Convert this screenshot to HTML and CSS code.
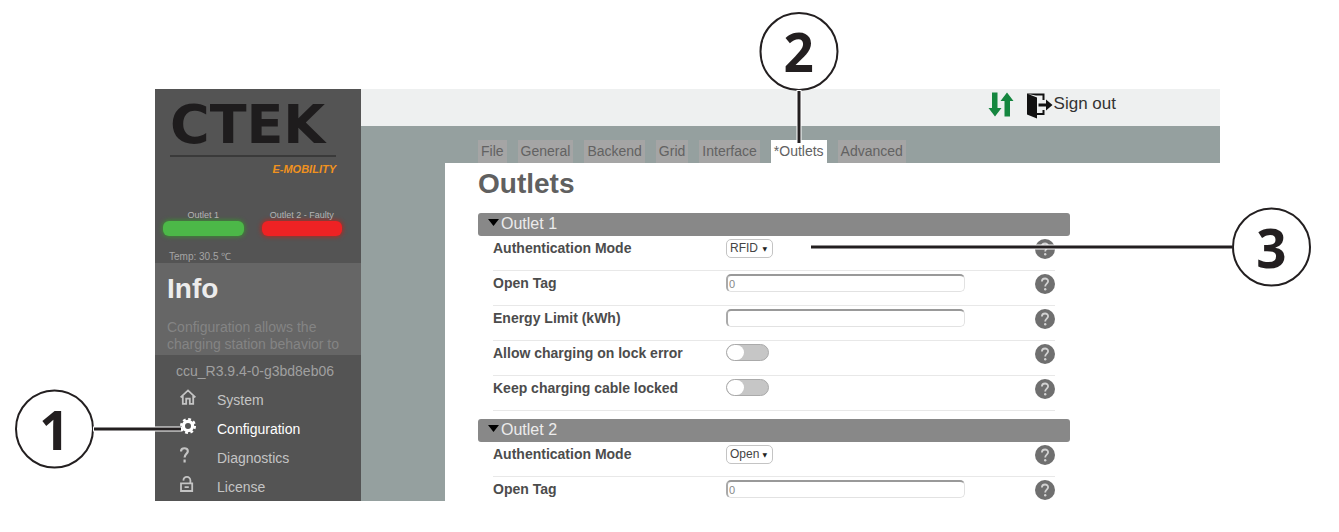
FILE: index.html
```html
<!DOCTYPE html>
<html lang="en">
<head>
    <meta charset="UTF-8">
    <meta name="viewport" content="width=device-width, initial-scale=1.0">
    <title>CTEK E-Mobility - Outlets</title>
    <link rel="stylesheet" href="styles.css">
</head>
<body>
<svg class="defs" width="0" height="0" aria-hidden="true">
    <symbol id="help" viewBox="0 0 20 20">
        <circle cx="10" cy="10" r="10" fill="#6f6f6f"/>
        <path d="M6.9 7.6C6.9 3.4 13.2 3.6 13.1 7.3C13 9.6 10.2 9.7 10.2 12.4" fill="none" stroke="#d2d2d2" stroke-width="1.8"/>
        <circle cx="10.2" cy="15.2" r="1.2" fill="#d2d2d2"/>
    </symbol>
</svg>
<div class="app">
    <aside class="sidebar">
        <div class="logo">
            <div class="logo-name">CTEK</div>
            <div class="logo-sub">E-MOBILITY</div>
        </div>
        <div class="status">
            <div class="outlet">Outlet 1<span class="lamp green"></span></div>
            <div class="outlet">Outlet 2 - Faulty<span class="lamp red"></span></div>
        </div>
        <div class="temp">Temp: 30.5 ℃</div>
        <div class="info">
            <h2>Info</h2>
            <p>Configuration allows the charging station behavior to</p>
        </div>
        <div class="version">ccu_R3.9.4-0-g3bd8eb06</div>
        <ul class="menu">
            <li>
                <a href="#">
                    <svg width="16" height="16" viewBox="0 0 16 16" fill="none" stroke="currentColor" stroke-width="1.8"><path d="M.6 8.4L8 1.4L15.4 8.4M2.8 7V14.8H6.2V9.6H9.8V14.8H13.2V7"/></svg>
                    System
                </a>
            </li>
            <li class="active">
                <a href="#">
                    <svg width="16" height="16" viewBox="0 0 16 16" fill="none" stroke="currentColor"><circle cx="8" cy="8" r="4.6" stroke-width="3.2"/><circle cx="8" cy="8" r="6.8" stroke-width="2.4" stroke-dasharray="2.8 2.54"/></svg>
                    Configuration
                </a>
                <div class="callout callout-left"><span class="circle">1</span><span class="line"></span></div>
            </li>
            <li>
                <a href="#">
                    <svg width="16" height="16" viewBox="0 0 16 16" fill="none" stroke="currentColor" stroke-width="2.2"><path d="M1 4.6C1 .2 7.8 .2 7.8 4.2C7.8 6.8 4.6 6.8 4.6 10.6M4.6 12.4V15.4"/></svg>
                    Diagnostics
                </a>
            </li>
            <li>
                <a href="#">
                    <svg width="16" height="16" viewBox="0 0 16 16" fill="none" stroke="currentColor" stroke-width="1.8"><path d="M1 7.4H12.2V15H1ZM3.4 4.6C3.6 -.2 10.4 -.2 10.4 4.4V7.4M4.6 11.2H8.8"/></svg>
                    License
                </a>
            </li>
        </ul>
    </aside>
    <main class="main">
        <header class="topbar">
            <svg width="26" height="25" viewBox="0 0 26 25" fill="#15863f"><path d="M4 .5H9.5V16H13.5L7 24.5L.5 16H4ZM16.5 24.5V9H12.5L19 .5L25.5 9H22V24.5Z"/></svg>
            <a class="signout" href="#">
                <svg width="27" height="27" viewBox="0 0 27 27"><path d="M2 2L11 5.5V26.5L1 22.5V1.5H18.5V8H16.5V3.5H10" fill="#111"/><path d="M11 22H17.5V18" fill="none" stroke="#111" stroke-width="2"/><path d="M12.5 11.5H20V7.5L26.5 13L20 18.5V14.5H12.5Z" fill="#111"/></svg>
                Sign out
            </a>
        </header>
        <ul class="tabs">
            <li><a href="#">File</a></li>
            <li><a href="#">General</a></li>
            <li><a href="#">Backend</a></li>
            <li><a href="#">Grid</a></li>
            <li><a href="#">Interface</a></li>
            <li class="active">
                <a href="#">*Outlets</a>
                <div class="callout callout-top"><span class="circle">2</span><span class="line"></span></div>
            </li>
            <li><a href="#">Advanced</a></li>
        </ul>
        <div class="content">
            <h1>Outlets</h1>
            <details class="section" open>
                <summary><svg width="11" height="7" viewBox="0 0 11 7"><path d="M0 0H11L5.5 7Z"/></svg>Outlet 1</summary>
                <div class="row">
                    <label for="auth1">Authentication Mode</label>
                    <div class="field"><span class="select"><select id="auth1"><option>RFID</option><option>Open</option></select></span></div>
                    <button class="help" aria-label="Help"><svg width="20" height="20"><use href="#help"/></svg></button>
                    <div class="callout callout-right"><span class="line"></span><span class="circle">3</span></div>
                </div>
                <div class="row">
                    <label for="tag1">Open Tag</label>
                    <div class="field"><input type="text" id="tag1" value="0"></div>
                    <button class="help" aria-label="Help"><svg width="20" height="20"><use href="#help"/></svg></button>
                </div>
                <div class="row">
                    <label for="limit1">Energy Limit (kWh)</label>
                    <div class="field"><input type="text" id="limit1"></div>
                    <button class="help" aria-label="Help"><svg width="20" height="20"><use href="#help"/></svg></button>
                </div>
                <div class="row">
                    <label for="lock1">Allow charging on lock error</label>
                    <div class="field"><input type="checkbox" class="toggle" id="lock1"></div>
                    <button class="help" aria-label="Help"><svg width="20" height="20"><use href="#help"/></svg></button>
                </div>
                <div class="row">
                    <label for="cable1">Keep charging cable locked</label>
                    <div class="field"><input type="checkbox" class="toggle" id="cable1"></div>
                    <button class="help" aria-label="Help"><svg width="20" height="20"><use href="#help"/></svg></button>
                </div>
            </details>
            <details class="section" open>
                <summary><svg width="11" height="7" viewBox="0 0 11 7"><path d="M0 0H11L5.5 7Z"/></svg>Outlet 2</summary>
                <div class="row">
                    <label for="auth2">Authentication Mode</label>
                    <div class="field"><span class="select"><select id="auth2"><option>Open</option><option>RFID</option></select></span></div>
                    <button class="help" aria-label="Help"><svg width="20" height="20"><use href="#help"/></svg></button>
                </div>
                <div class="row">
                    <label for="tag2">Open Tag</label>
                    <div class="field"><input type="text" id="tag2" value="0"></div>
                    <button class="help" aria-label="Help"><svg width="20" height="20"><use href="#help"/></svg></button>
                </div>
            </details>
        </div>
    </main>
</div>
</body>
</html>
```
FILE: styles.css
```css
* {
    box-sizing: border-box;
}

body {
    margin: 0;
    padding: 89px 119px 30px 155px;
    font-family: "Liberation Sans", Arial, sans-serif;
    font-size: 14px;
    background-color: #fff;
}

a {
    color: inherit;
    text-decoration: none;
}

ul {
    list-style: none;
    margin: 0;
    padding: 0;
}

.defs {
    position: absolute;
}

.app {
    display: flex;
}

/* sidebar */
.sidebar {
    flex: 0 0 206px;
    background-color: #545454;
    color: #b4b4b4;
}

.logo {
    margin: 0 25px 0 15px;
}

.logo-name {
    padding-top: 14px;
    height: 68px;
    border-bottom: 2px solid #3a3a3a;
    font-family: "DejaVu Sans", sans-serif;
    font-size: 54px;
    font-weight: bold;
    line-height: 44px;
    color: #1e1c1d;
}

.logo-sub {
    padding-top: 6px;
    font-size: 11px;
    font-weight: bold;
    font-style: italic;
    line-height: 13px;
    text-align: right;
    color: #f0921e;
}

.status {
    display: flex;
    gap: 18px;
    padding: 33px 19px 0 8px;
}

.outlet {
    flex: 1;
    font-size: 9px;
    line-height: 12px;
    text-align: center;
    white-space: nowrap;
}

.lamp {
    display: block;
    height: 15px;
    border-radius: 6px;
}

.green {
    background-color: #4cb848;
    box-shadow: 0 0 4px 1px #3c8a33;
}

.red {
    background-color: #ee2224;
    box-shadow: 0 0 4px 1px #b02a22;
}

.temp {
    padding: 15px 14px 0;
    font-size: 10px;
    line-height: 12px;
    color: #a5a5a5;
}

.info {
    height: 92px;
    padding: 10px 12px 0;
    overflow: hidden;
    background-color: #666;
    color: #848484;
}

.info h2 {
    margin: 0 0 14px;
    font-size: 28px;
    line-height: 32px;
    color: #ececec;
}

.info p {
    margin: 0;
    line-height: 17px;
}

.version {
    padding: 7px 21px 5px;
    line-height: 18px;
    color: #a0a0a0;
}

.menu li {
    position: relative;
}

.menu a {
    display: flex;
    align-items: center;
    gap: 21px;
    height: 29px;
    padding-left: 25px;
    color: #c4c4c4;
}

.menu svg {
    margin-bottom: 6px;
}

.menu .active a {
    color: #fff;
}

/* main area */
.main {
    flex: 1;
    min-width: 0;
    display: flex;
    flex-direction: column;
    background-color: #95a09f;
}

.topbar {
    display: flex;
    justify-content: flex-end;
    gap: 12px;
    height: 37px;
    padding: 3px 104px 0 0;
    background-color: #eef0f0;
}

.signout {
    display: flex;
    gap: 1px;
    font-size: 17px;
    line-height: 24px;
    color: #333;
}

.tabs {
    display: flex;
    gap: 11px;
    padding: 14px 0 0 117px;
}

.tabs li {
    position: relative;
}

.tabs a {
    display: block;
    padding: 0 3px;
    line-height: 23px;
    background-color: #a5a5a5;
    color: #626262;
}

.tabs .active a {
    background-color: #fff;
}

.content {
    flex: 1;
    margin-left: 84px;
    padding: 5px 150px 0 33px;
    background-color: #fff;
}

h1 {
    margin: 0 0 13px;
    font-size: 28px;
    line-height: 32px;
    color: #606060;
}

.section {
    margin-bottom: 8px;
}

.section:last-child {
    margin-bottom: 0;
}

summary {
    display: flex;
    align-items: flex-start;
    gap: 2px;
    height: 23px;
    padding-left: 10px;
    border-radius: 3px;
    background-color: #888;
    color: #ececec;
    font-size: 16px;
    line-height: 22px;
    cursor: pointer;
}

summary svg {
    margin-top: 6px;
}

.row {
    position: relative;
    display: flex;
    align-items: flex-start;
    margin: 0 15px;
    padding: 3px 0 11px;
    border-bottom: 1px solid #e8e8e8;
}

.section:last-child .row:last-child {
    padding-bottom: 0;
    border-bottom: none;
}

.row label {
    flex: 0 0 233px;
    font-weight: bold;
    line-height: 18px;
    color: #4c4c4c;
}

.field {
    flex: 1;
    display: flex;
}

.field input[type="text"] {
    width: 239px;
    height: 18px;
    padding: 0 1px;
    border: 1px solid #e2e2e2;
    border-top: 2px solid #999;
    border-left: 2px solid #aaa;
    border-radius: 5px;
    font-family: inherit;
    font-size: 11px;
    color: #888;
    background-color: #fff;
}

.select {
    position: relative;
}

.select::after {
    content: "▼";
    position: absolute;
    right: 6px;
    top: 0;
    font-family: "DejaVu Sans", sans-serif;
    font-size: 6px;
    line-height: 19px;
    color: #222;
    pointer-events: none;
}

select {
    display: block;
    appearance: none;
    width: 47px;
    height: 19px;
    padding: 0 0 1px 3px;
    border: 1px solid #c4c4c4;
    border-radius: 5px;
    background-color: #fff;
    font-family: inherit;
    font-size: 12px;
    color: #444;
}

.toggle {
    appearance: none;
    width: 43px;
    height: 17px;
    margin: 0;
    border: 1px solid #aaa;
    border-radius: 9px;
    background-color: #c6c6c6;
    overflow: hidden;
}

.toggle::before {
    content: "";
    display: block;
    width: 17px;
    height: 15px;
    border-radius: 8px;
    background-color: #fff;
}

.toggle:checked::before {
    margin-left: auto;
}

.help {
    display: block;
    padding: 0;
    border: none;
    background: none;
    cursor: pointer;
}

.help svg {
    display: block;
}

/* numbered callouts */
.callout {
    position: absolute;
    z-index: 1;
    display: flex;
    align-items: center;
}

.circle {
    flex: none;
    width: 79px;
    height: 79px;
    border: 2px solid #231f20;
    border-radius: 50%;
    background-color: #fff;
    font-family: "Open Sans", sans-serif;
    font-size: 53px;
    font-weight: bold;
    line-height: 75px;
    text-align: center;
    color: #231f20;
}

.line {
    background-color: #231f20;
    box-shadow: 0 0 0 1px #fff;
}

.callout-left {
    right: calc(100% - 26px);
    top: 50%;
    transform: translateY(-50%);
}

.callout-left .line {
    width: 87px;
    height: 3px;
}

.callout-top {
    left: 50%;
    bottom: calc(100% - 3px);
    flex-direction: column;
    transform: translateX(-50%);
}

.callout-top .line {
    width: 3px;
    height: 52px;
}

.callout-right {
    left: 318px;
    right: -256px;
    top: 11px;
    transform: translateY(-50%);
}

.callout-right .line {
    flex: 1;
    height: 3px;
}
```
